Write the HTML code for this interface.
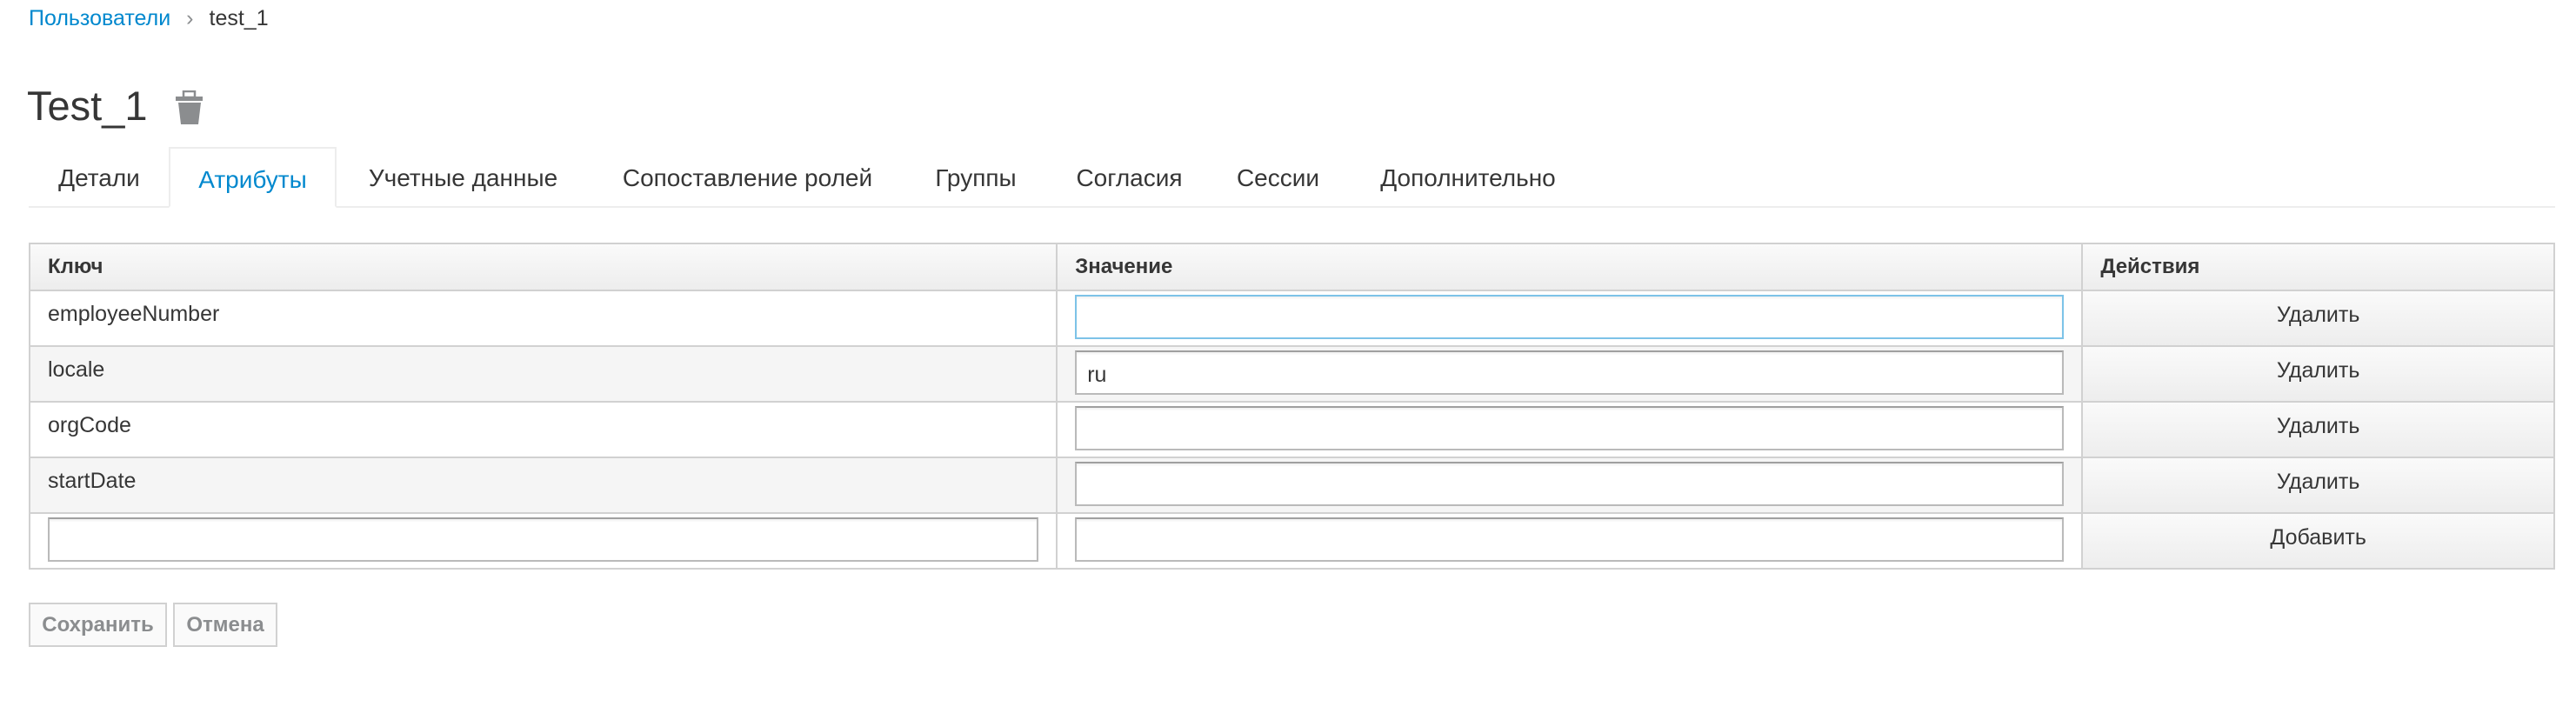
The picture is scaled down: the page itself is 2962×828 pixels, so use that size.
<!DOCTYPE html>
<html><head><meta charset="utf-8"><style>
*{box-sizing:border-box;margin:0;padding:0}
body{width:2962px;height:828px;background:#fff;font-family:"Liberation Sans",sans-serif;color:#363636;position:relative;overflow:hidden}
.abs{position:absolute;white-space:nowrap}
.bc{top:6px;left:33px;font-size:25px;line-height:30px}
.bc a{color:#0088ce;text-decoration:none}
.bc .sep{color:#8b8d8f;margin:0 18px}
.title{top:92px;left:31px;font-size:47px;line-height:60px;color:#363636}
.tabs{top:169px;left:33px;width:2905px;height:70px;border-bottom:2px solid #ededed}
.tab{position:absolute;top:0;height:70px;font-size:28px;line-height:72px;text-align:center;color:#363636}
.tab.active{border:2px solid #ededed;border-bottom:2px solid #fff;color:#0088ce;height:70px;background:#fff}
table{position:absolute;top:279px;left:33px;width:2905px;border-collapse:collapse;font-size:25px}
td,th{border:2px solid #d1d1d1;text-align:left;vertical-align:top}
th{height:53px;background:linear-gradient(#fafafa,#ededed);font-weight:bold;padding:14px 20px;line-height:24px;font-size:24px}
td{height:64px;padding:12px 20px;line-height:28px}
tr.g td{background:#f5f5f5}
td.inp{padding:4px 20px}
td.act{background:linear-gradient(#fafafa,#ededed)!important;text-align:center;padding-top:13px}
.in{height:51px;border:2px solid #bababa;border-top-color:#a0a0a0;background:#fff;box-shadow:inset 0 2px 2px rgba(0,0,0,.06);padding:12px 12px;font-size:25px;line-height:28px}
.in.f{border-color:#7dc3e8}
.btn{top:693px;height:51px;border:2px solid #d1d1d1;background:#fafafa;color:#8b8d8f;font-weight:bold;font-size:24px;line-height:47px;text-align:center}
</style></head><body>
<div class="abs bc"><a>Пользователи</a><span class="sep">›</span>test_1</div>
<div class="abs title">Test_1</div>
<svg class="abs" style="left:200px;top:104px" width="36" height="42" viewBox="200 104 36 42">
<rect x="211" y="105" width="13" height="7" fill="none" stroke="#8b8d8f" stroke-width="2.5"/>
<rect x="202" y="111" width="31" height="5" fill="#8b8d8f"/>
<path d="M205 118 H231 L228 143 H208 Z" fill="#8b8d8f"/>
</svg>
<div class="abs tabs">
<div class="tab" style="left:2px;width:158px">Детали</div>
<div class="tab active" style="left:161px;width:193px">Атрибуты</div>
<div class="tab" style="left:353px;width:293px">Учетные данные</div>
<div class="tab" style="left:646px;width:361px">Сопоставление ролей</div>
<div class="tab" style="left:1007px;width:164px">Группы</div>
<div class="tab" style="left:1173px;width:185px">Согласия</div>
<div class="tab" style="left:1358px;width:157px">Сессии</div>
<div class="tab" style="left:1515px;width:280px">Дополнительно</div>
</div>
<table>
<colgroup><col style="width:1182px"><col style="width:1180px"><col style="width:543px"></colgroup>
<tr><th>Ключ</th><th>Значение</th><th>Действия</th></tr>
<tr><td>employeeNumber</td><td class="inp"><div class="in f"></div></td><td class="act">Удалить</td></tr>
<tr class="g"><td>locale</td><td class="inp"><div class="in">ru</div></td><td class="act">Удалить</td></tr>
<tr><td>orgCode</td><td class="inp"><div class="in"></div></td><td class="act">Удалить</td></tr>
<tr class="g"><td>startDate</td><td class="inp"><div class="in"></div></td><td class="act">Удалить</td></tr>
<tr><td class="inp"><div class="in"></div></td><td class="inp"><div class="in"></div></td><td class="act">Добавить</td></tr>
</table>
<div class="abs btn" style="left:33px;width:159px">Сохранить</div>
<div class="abs btn" style="left:199px;width:120px">Отмена</div>
</body></html>
